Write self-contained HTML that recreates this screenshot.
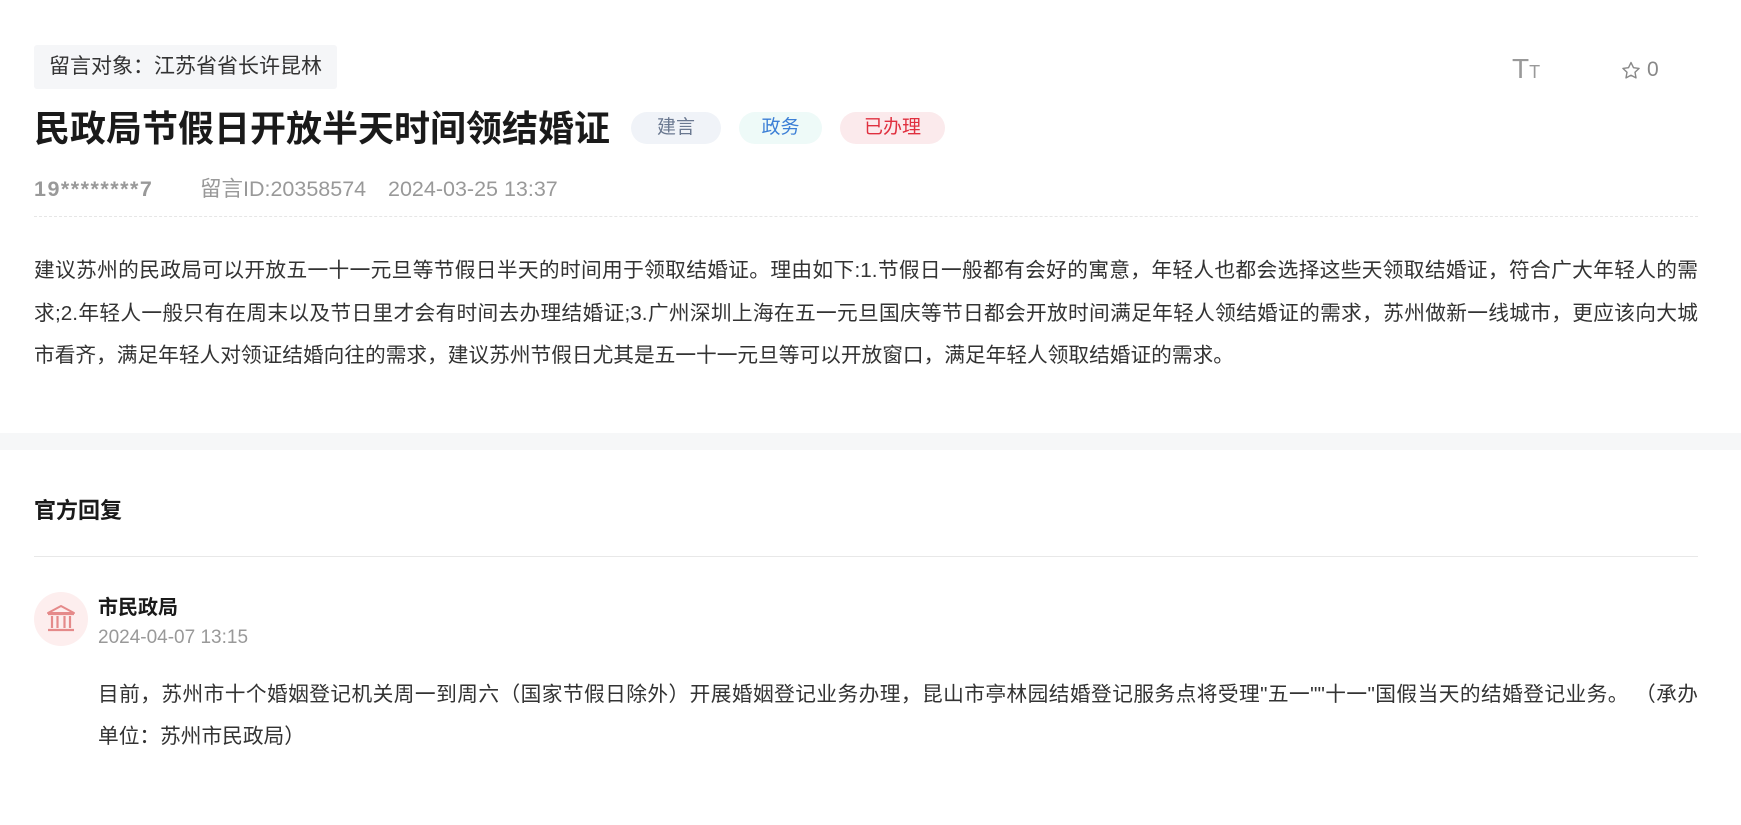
<!DOCTYPE html>
<html><head><meta charset="utf-8"><style>
*{margin:0;padding:0;box-sizing:border-box}
body{width:1741px;height:825px;background:#fff;font-family:"Liberation Sans","Noto Sans CJK SC",sans-serif;position:relative;overflow:hidden;color:#333}
.a{position:absolute;white-space:nowrap}
.label{left:34px;top:45px;width:303px;height:44px;background:#f5f6f8;border-radius:3px;font-size:21px;line-height:44px;padding-left:15px;color:#333}
.title{left:34px;top:105px;font-size:36px;font-weight:bold;color:#1a1a1a;line-height:48px}
.tag{top:112px;height:32px;border-radius:16px;font-size:19px;line-height:32px;text-align:center}
.meta{top:176px;font-size:21.5px;color:#999;line-height:26px}
.line{left:34px;width:1664px;font-size:20.7px;color:#333;text-align:justify;text-align-last:justify;line-height:30px}
.line.last{text-align-last:left}
.rline{left:98px;width:1600px;font-size:20.7px;color:#333;text-align:justify;text-align-last:justify;line-height:30px}
</style></head><body>
<div class="a label">留言对象：江苏省省长许昆林</div>
<div class="a title">民政局节假日开放半天时间领结婚证</div>
<div class="a tag" style="left:631px;width:90px;background:#f0f3f8;color:#6a7890">建言</div>
<div class="a tag" style="left:739px;width:83px;background:#eefaf8;color:#3c7fd6">政务</div>
<div class="a tag" style="left:840px;width:105px;background:#fbeaec;color:#e0303f">已办理</div>
<div class="a" style="left:1512px;top:55px;color:#999;font-size:28px;line-height:28px;font-weight:300">T<span style="font-size:18px">T</span></div>
<svg class="a" style="left:1621px;top:61px" width="20" height="19" viewBox="0 0 20 19"><path d="M10 1.5l2.5 5.2 5.6.7-4.1 3.9 1 5.6-5-2.7-5 2.7 1-5.6-4.1-3.9 5.6-.7z" fill="none" stroke="#888" stroke-width="1.4" stroke-linejoin="round"/></svg>
<div class="a" style="left:1647px;top:58px;color:#888;font-size:21px;line-height:24px">0</div>
<div class="a meta" style="left:34px;font-weight:bold;letter-spacing:1.5px">19********7</div>
<div class="a meta" style="left:200px">留言ID:20358574</div>
<div class="a meta" style="left:388px">2024-03-25 13:37</div>
<div class="a" style="left:34px;top:216px;width:1664px;border-top:1px dashed #e6e6e6"></div>
<div class="a line" style="top:256px">建议苏州的民政局可以开放五一十一元旦等节假日半天的时间用于领取结婚证。理由如下:1.节假日一般都有会好的寓意，年轻人也都会选择这些天领取结婚证，符合广大年轻人的需</div>
<div class="a line" style="top:299px">求;2.年轻人一般只有在周末以及节日里才会有时间去办理结婚证;3.广州深圳上海在五一元旦国庆等节日都会开放时间满足年轻人领结婚证的需求，苏州做新一线城市，更应该向大城</div>
<div class="a line last" style="top:341px">市看齐，满足年轻人对领证结婚向往的需求，建议苏州节假日尤其是五一十一元旦等可以开放窗口，满足年轻人领取结婚证的需求。</div>
<div class="a" style="left:0;top:433px;width:1741px;height:17px;background:#f6f7f8"></div>
<div class="a" style="left:34px;top:497px;font-size:22px;font-weight:bold;color:#1a1a1a;line-height:28px">官方回复</div>
<div class="a" style="left:34px;top:556px;width:1664px;border-top:1px solid #e8e8e8"></div>
<div class="a" style="left:34px;top:592px;width:54px;height:54px;border-radius:50%;background:#fdeeee"></div>
<svg class="a" style="left:45px;top:604px" width="32" height="30" viewBox="0 0 32 30"><path d="M16 2L3 9h26z" fill="none" stroke="#e58a8a" stroke-width="2" stroke-linejoin="round"/><path d="M3 10h26M7 12v12M12.5 12v12M19.5 12v12M25 12v12M3 26h26" stroke="#e58a8a" stroke-width="2.2" fill="none"/></svg>
<div class="a" style="left:98px;top:595px;font-size:20px;font-weight:bold;color:#1a1a1a;line-height:26px">市民政局</div>
<div class="a" style="left:98px;top:627px;font-size:19px;color:#999;line-height:22px">2024-04-07 13:15</div>
<div class="a rline" style="top:680px">目前，苏州市十个婚姻登记机关周一到周六（国家节假日除外）开展婚姻登记业务办理，昆山市亭林园结婚登记服务点将受理"五一""十一"国假当天的结婚登记业务。 （承办</div>
<div class="a rline" style="top:722px;text-align-last:left">单位：苏州市民政局）</div>
</body></html>
